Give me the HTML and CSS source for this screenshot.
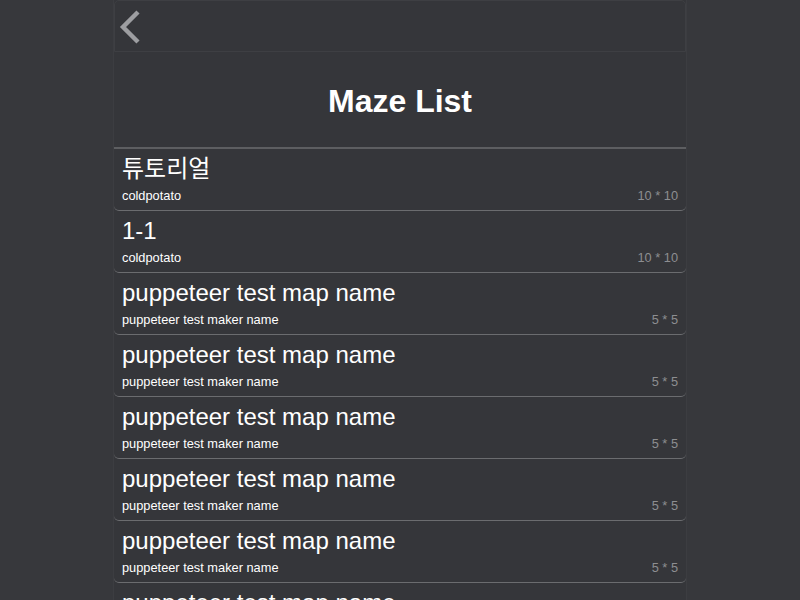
FILE: index.html
```html
<!DOCTYPE html>
<html>
<head>
<meta charset="utf-8">
<link rel="stylesheet" href="styles.css">
</head>
<body>
<div class="page">
  <header class="topbar">
    <button class="back" aria-label="back">
      <svg width="26" height="36" viewBox="0 0 26 36"><polyline points="20,4 5,19 20,34" fill="none" stroke="#9d9ea1" stroke-width="4.4"/></svg>
    </button>
  </header>
  <section class="title-area"><h1 class="title">Maze List</h1></section>
  <ul class="list">
    <li class="item"><div class="name">튜토리얼</div><div class="meta"><span class="maker">coldpotato</span><span class="size">10 * 10</span></div></li>
    <li class="item"><div class="name">1-1</div><div class="meta"><span class="maker">coldpotato</span><span class="size">10 * 10</span></div></li>
    <li class="item"><div class="name">puppeteer test map name</div><div class="meta"><span class="maker">puppeteer test maker name</span><span class="size">5 * 5</span></div></li>
    <li class="item"><div class="name">puppeteer test map name</div><div class="meta"><span class="maker">puppeteer test maker name</span><span class="size">5 * 5</span></div></li>
    <li class="item"><div class="name">puppeteer test map name</div><div class="meta"><span class="maker">puppeteer test maker name</span><span class="size">5 * 5</span></div></li>
    <li class="item"><div class="name">puppeteer test map name</div><div class="meta"><span class="maker">puppeteer test maker name</span><span class="size">5 * 5</span></div></li>
    <li class="item"><div class="name">puppeteer test map name</div><div class="meta"><span class="maker">puppeteer test maker name</span><span class="size">5 * 5</span></div></li>
    <li class="item"><div class="name">puppeteer test map name</div><div class="meta"><span class="maker">puppeteer test maker name</span><span class="size">5 * 5</span></div></li>
  </ul>
</div>
</body>
</html>
```
FILE: styles.css
```css
html, body {
  margin: 0;
  padding: 0;
  background: #37383c;
  font-family: "Liberation Sans", Arial, "Noto Sans CJK KR", sans-serif;
  color: #ffffff;
  overflow: hidden;
}
.page {
  width: 574px;
  margin: 0 auto;
  background: #35363a;
  border-left: 1px solid #3c3d41;
  border-right: 1px solid #3c3d41;
  box-sizing: border-box;
  min-height: 600px;
}
.topbar {
  height: 52px;
  box-sizing: border-box;
  border: 1px solid #3e3f43;
  border-radius: 5px 5px 0 0;
  display: flex;
  align-items: center;
  padding-left: 3px;
}
.back {
  background: none;
  border: none;
  padding: 0;
  margin: 0;
  display: flex;
  margin-top: -1px;
}
.title-area {
  display: flex;
  align-items: center;
  justify-content: center;
  border-bottom: 2px solid #5d5e61;
  box-sizing: border-box;
  height: 97px;
}
.title {
  margin: 0;
  font-size: 32px;
  font-weight: bold;
  line-height: 36px;
  margin-top: 2px;
}
.list {
  list-style: none;
  margin: 0;
  padding: 0;
}
.item {
  height: 62px;
  box-sizing: border-box;
  padding: 6px 8px 0 8px;
  border-bottom: 1px solid #6b6c6f;
  border-radius: 0 0 5px 5px;
}
.name {
  font-size: 24px;
  line-height: 28px;
  white-space: nowrap;
}
.meta {
  display: flex;
  justify-content: space-between;
  font-size: 12.8px;
  line-height: 16px;
  margin-top: 5px;
}
.size {
  color: #8d8e91;
}
```
